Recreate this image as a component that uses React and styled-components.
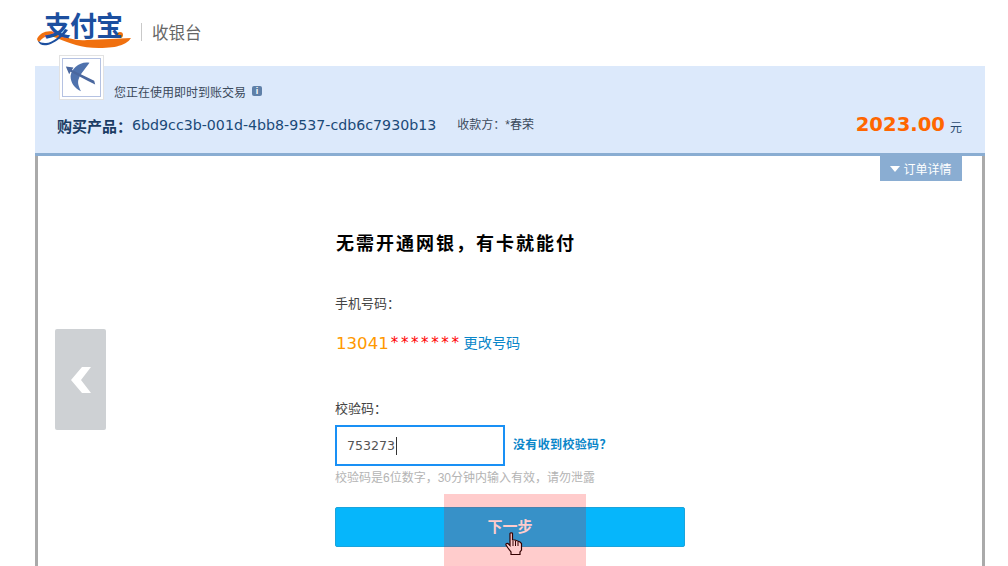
import React from 'react'
import styled, { createGlobalStyle } from 'styled-components'

const CJK = '"Liberation Sans", "Noto Sans CJK SC", sans-serif'
const WIDE = '"DejaVu Sans", "Noto Sans CJK SC", sans-serif'

const GlobalStyle = createGlobalStyle`
  html, body {
    margin: 0;
    padding: 0;
    background: #fff;
    overflow: hidden;
  }
  * {
    box-sizing: border-box;
  }
`
const Page = styled.div`
  position: relative;
  width: 1008px;
  height: 566px;
  overflow: hidden;
  font-family: ${CJK};
`
const Header = styled.div`
  height: 66px;
  padding-left: 37px;
  display: flex;
  align-items: center;
`
const Logo = styled.div`
  position: relative;
  width: 94px;
  height: 36px;
  margin-top: -6px;
  svg {
    position: absolute;
    left: 0;
    top: 0;
  }
`
const LogoText = styled.span`
  position: absolute;
  left: 7px;
  top: -4px;
  font-size: 27px;
  line-height: 34px;
  font-weight: 700;
  letter-spacing: -1px;
  white-space: nowrap;
  color: #1c4f9f;
  font-family: "Noto Sans CJK SC", sans-serif;
`
const Divider = styled.div`
  width: 1px;
  height: 18px;
  margin: -2px 10px 0 10px;
  background: #c9c9c9;
`
const Cashier = styled.div`
  font-size: 16.5px;
  color: #666;
  margin-top: -3px;
`
const Band = styled.div`
  position: relative;
  width: 950px;
  height: 90px;
  margin-left: 35px;
  padding: 16px 23px 0 22px;
  background: #dce9fb;
  border-bottom: 3px solid #8aadd2;
`
const Avatar = styled.div`
  position: absolute;
  left: 24px;
  top: -11px;
  width: 45px;
  height: 45px;
  padding: 2px;
  background: #fff;
  border: 1px solid #e2e2e2;
  div {
    width: 100%;
    height: 100%;
    border: 1px solid #b5c2e2;
    background: #fff;
  }
`
const Notice = styled.div`
  display: flex;
  align-items: center;
  height: 18px;
  margin-left: 57px;
  font-size: 12px;
  color: #3b4a5c;
`
const InfoBadge = styled.span`
  width: 10px;
  height: 10px;
  margin-left: 6px;
  border-radius: 2px;
  background: #5f80a8;
  color: #fff;
  font-size: 9px;
  line-height: 10px;
  text-align: center;
  font-weight: 700;
`
const Summary = styled.div`
  display: flex;
  align-items: center;
  height: 24px;
  margin-top: 13px;
  color: #1f3f66;
`
const ProductLabel = styled.span`
  font-size: 15px;
  font-weight: 700;
  color: #1b3c63;
`
const ProductId = styled.span`
  font-family: ${WIDE};
  font-size: 14.2px;
  color: #1b4a78;
`
const Payee = styled.span`
  margin-left: 21px;
  margin-top: -4px;
  font-size: 12px;
  color: #3b4a5c;
`
const Amount = styled.span`
  margin-left: auto;
  margin-top: -2px;
  font-family: ${WIDE};
  font-size: 19.6px;
  font-weight: 700;
  color: #ff6600;
`
const Yuan = styled.span`
  margin-left: 5px;
  margin-top: 2px;
  font-size: 12px;
  color: #2b4a6f;
`
const Panel = styled.div`
  position: relative;
  display: flex;
  width: 950px;
  height: 410px;
  margin-left: 35px;
  padding-left: 17px;
  border-left: 3px solid #aaa;
  border-right: 3px solid #aaa;
`
const DetailTab = styled.div`
  position: absolute;
  right: 20px;
  top: 0;
  width: 82px;
  height: 25px;
  display: flex;
  align-items: center;
  justify-content: center;
  gap: 3px;
  background: #8aadd2;
  color: #fff;
  font-size: 12px;
  &::before {
    content: '';
    border-left: 5px solid transparent;
    border-right: 5px solid transparent;
    border-top: 6px solid #fff;
  }
`
const BackButton = styled.div`
  width: 51px;
  height: 101px;
  margin-top: 173px;
  display: flex;
  align-items: center;
  justify-content: center;
  background: #ced1d4;
  border-radius: 2px;
`
const Form = styled.div`
  margin-left: 229px;
  width: 400px;
`
const Title = styled.h2`
  margin: 77px 0 0 1px;
  font-size: 18px;
  line-height: 22px;
  font-weight: 700;
  letter-spacing: 2px;
  color: #000;
`
const Label = styled.div`
  margin-top: ${(p) => p.$top}px;
  font-size: 13px;
  line-height: 18px;
  color: #444;
`
const PhoneRow = styled.div`
  display: flex;
  align-items: center;
  height: 24px;
  margin-top: 18px;
`
const PhoneDigits = styled.span`
  font-family: ${WIDE};
  font-size: 16.6px;
  color: #ff9900;
  margin-left: 1px;
`
const PhoneMask = styled.span`
  font-family: ${WIDE};
  font-size: 15px;
  color: #ff0000;
  margin-left: 2px;
  letter-spacing: 2.6px;
`
const ChangeLink = styled.a`
  margin-left: 2px;
  margin-top: -2px;
  font-size: 14.2px;
  color: #0a86c9;
`
const CodeRow = styled.div`
  display: flex;
  align-items: center;
  margin-top: 7px;
`
const CodeInput = styled.div`
  width: 170px;
  height: 41px;
  display: flex;
  align-items: center;
  padding-left: 10px;
  border: 2px solid #1990f5;
  font-family: ${WIDE};
  font-size: 12.6px;
  color: #555;
  &::after {
    content: '';
    width: 1px;
    height: 18px;
    margin-left: 1px;
    background: #333;
  }
`
const HelpLink = styled.a`
  margin-left: 8px;
  margin-top: -4px;
  font-size: 12px;
  font-weight: 700;
  letter-spacing: 0.35px;
  color: #0a86c9;
`
const Hint = styled.div`
  margin-top: 3px;
  font-size: 12px;
  line-height: 18px;
  color: #b4b4b4;
`
const NextButton = styled.div`
  width: 350px;
  height: 40px;
  margin-top: 20px;
  padding-bottom: 4px;
  display: flex;
  align-items: center;
  justify-content: center;
  background: #06b6fb;
  border: 1px solid #1ba4dc;
  border-radius: 2px;
  color: #fff;
  font-size: 15px;
  font-weight: 700;
`
const Highlight = styled.div`
  position: absolute;
  left: 444px;
  top: 494px;
  width: 142px;
  height: 72px;
  background: rgba(255, 0, 0, 0.2);
`
const Cursor = styled.svg`
  position: absolute;
  left: 505px;
  top: 532px;
`

const Swoosh = () => (
  <svg width="94" height="36" viewBox="0 0 94 36">
    <path d="M0 27 C3 20 12 17 20 21 C30 26 38 29 50 28 C66 27 80 27 94 26 C90 32 82 36 62 36 C44 36 32 31 22 27 C14 23 7 23 3 29 C2 31 1 30 0 27 Z" fill="#f0700f" />
    <path d="M1 29 C3 35 12 35 22 27 C26 24 29 21 31 18 L28 17 C24 24 14 32 8 31 C5 31 3 30 1 29 Z" fill="#1c4f9f" />
    <circle cx="83" cy="23" r="3" fill="#f0700f" />
  </svg>
)

const Swallow = () => (
  <svg width="35" height="35" viewBox="0 0 37 37">
    <path d="M28 4 C18 2 9 10 8 18 C8 25 12 31 19 34 C16 28 15 24 17 20 C19 15 24 10 28 4 Z" fill="#4f72ad" />
    <path d="M3 8 L11 9 L9.5 11.5 L33 23 L34 27 L27 23.5 L8 13.5 L6.5 16 Z" fill="#4a679e" />
  </svg>
)

const Chevron = () => (
  <svg width="22" height="26" viewBox="0 0 22 26">
    <path d="M21 0 L11 13 L21 26 H12 L1 13 L12 0 Z" fill="#fff" />
  </svg>
)

const Hand = () => (
  <Cursor width="18" height="24" viewBox="0 0 18 24">
    <path
      d="M5 1.5 C5 0.6 7.5 0.6 7.5 1.5 V8 L10 8 L12.5 9 L15 10 L16.5 11.5 V18 L15 20 V22.5 H6 V20 L3 16 L1 13 C0.5 11.5 2.5 11 3.5 12 L5 13.5 Z"
      fill="#ffcccc"
      stroke="#300"
      strokeWidth="1.2"
    />
    <path d="M8 9 V14 M10.5 9 V14 M13 10 V14" stroke="#300" strokeWidth="1" fill="none" />
  </Cursor>
)

export default function App() {
  return (
    <Page>
      <GlobalStyle />
      <Header>
        <Logo>
          <Swoosh />
          <LogoText>支付宝</LogoText>
        </Logo>
        <Divider />
        <Cashier>收银台</Cashier>
      </Header>
      <Band>
        <Avatar>
          <div><Swallow /></div>
        </Avatar>
        <Notice>
          您正在使用即时到账交易
          <InfoBadge>i</InfoBadge>
        </Notice>
        <Summary>
          <ProductLabel>购买产品：</ProductLabel>
          <ProductId>6bd9cc3b-001d-4bb8-9537-cdb6c7930b13</ProductId>
          <Payee>收款方：*春荣</Payee>
          <Amount>2023.00</Amount>
          <Yuan>元</Yuan>
        </Summary>
      </Band>
      <Panel>
        <DetailTab>订单详情</DetailTab>
        <BackButton><Chevron /></BackButton>
        <Form>
          <Title>无需开通网银，有卡就能付</Title>
          <Label $top={40}>手机号码：</Label>
          <PhoneRow>
            <PhoneDigits>13041</PhoneDigits>
            <PhoneMask>*******</PhoneMask>
            <ChangeLink>更改号码</ChangeLink>
          </PhoneRow>
          <Label $top={45}>校验码：</Label>
          <CodeRow>
            <CodeInput>753273</CodeInput>
            <HelpLink>没有收到校验码？</HelpLink>
          </CodeRow>
          <Hint>校验码是6位数字，30分钟内输入有效，请勿泄露</Hint>
          <NextButton>下一步</NextButton>
        </Form>
      </Panel>
      <Highlight />
      <Hand />
    </Page>
  )
}
